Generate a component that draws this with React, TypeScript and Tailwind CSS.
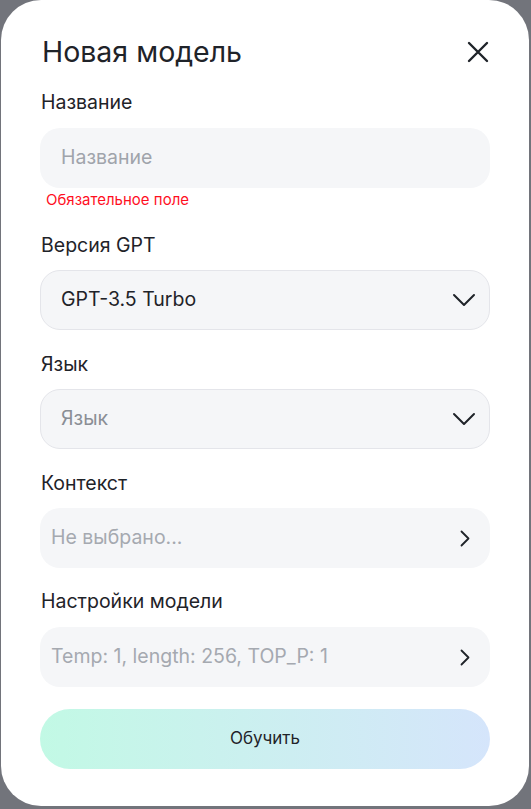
const font = { fontFamily: "Inter, 'Noto Sans', sans-serif" };

function Label({ children }: { children: React.ReactNode }) {
  return <div className="text-[19.5px] leading-6 text-[#1f2329]">{children}</div>;
}

function CloseIcon() {
  return (
    <svg width="22" height="22" viewBox="0 0 22 22" fill="none" stroke="currentColor" strokeWidth="2.4" strokeLinecap="round">
      <path d="M2 2l18 18M20 2L2 20" />
    </svg>
  );
}

function DownIcon() {
  return (
    <svg width="24" height="14" viewBox="0 0 24 14" fill="none" stroke="currentColor" strokeWidth="2" strokeLinecap="round" strokeLinejoin="round">
      <path d="M2 2l10 10L22 2" />
    </svg>
  );
}

function RightIcon() {
  return (
    <svg width="10" height="17" viewBox="0 0 10 17" fill="none" stroke="currentColor" strokeWidth="1.8" strokeLinecap="round" strokeLinejoin="round">
      <path d="M1.5 1.5l7 7-7 7" />
    </svg>
  );
}

export default function App() {
  return (
    <div className="w-[531px] h-[809px] bg-[#72747b] pl-px pr-[2px] pb-[3px]" style={font}>
      <div className="h-full bg-white rounded-[40px] pl-[39px] pr-[39px] pt-[34px] flex flex-col">
        {/* header */}
        <div className="flex items-center justify-between">
          <h1 className="text-[28.5px] leading-9 text-[#1f2329] pl-[2px]">Новая модель</h1>
          <button className="text-[#1f2329] mr-[1px]">
            <CloseIcon />
          </button>
        </div>

        <div className="mt-[20px]">
          <div className="pl-[1px]"><Label>Название</Label></div>
          <div className="mt-[14px] h-[60px] rounded-[20px] bg-[#f5f6f8] flex items-center px-[21px]">
            <span className="text-[19.5px] text-[#a0a4ab]">Название</span>
          </div>
          <div className="mt-[2px] pl-[6px] text-[15px] leading-5 text-[#ff0f1f]">Обязательное поле</div>
        </div>

        <div className="mt-[23px]">
          <div className="pl-[1px]"><Label>Версия GPT</Label></div>
          <div className="mt-[13px] h-[60px] rounded-[20px] bg-[#f5f6f8] border border-[#e4e5ea] flex items-center justify-between pl-5 pr-[13px]">
            <span className="text-[19.5px] text-[#1f2329]">GPT-3.5 Turbo</span>
            <span className="text-[#1f2329]"><DownIcon /></span>
          </div>
        </div>

        <div className="mt-[22px]">
          <div className="pl-[1px]"><Label>Язык</Label></div>
          <div className="mt-[13px] h-[60px] rounded-[20px] bg-[#f5f6f8] border border-[#e4e5ea] flex items-center justify-between pl-5 pr-[13px]">
            <span className="text-[19.5px] text-[#8a8e95]">Язык</span>
            <span className="text-[#1f2329]"><DownIcon /></span>
          </div>
        </div>

        <div className="mt-[22px]">
          <div className="pl-[1px]"><Label>Контекст</Label></div>
          <div className="mt-[13px] h-[60px] rounded-[20px] bg-[#f5f6f8] flex items-center justify-between pl-[11px] pr-[20px]">
            <span className="text-[19.5px] text-[#a5a9b0]">Не выбрано...</span>
            <span className="text-[#1f2329]"><RightIcon /></span>
          </div>
        </div>

        <div className="mt-[21px]">
          <div className="pl-[1px]"><Label>Настройки модели</Label></div>
          <div className="mt-[14px] h-[60px] rounded-[20px] bg-[#f5f6f8] flex items-center justify-between pl-[11px] pr-[20px]">
            <span className="text-[19.5px] text-[#a5a9b0]">Temp: 1, length: 256, TOP_P: 1</span>
            <span className="text-[#1f2329]"><RightIcon /></span>
          </div>
        </div>

        <button className="mt-[22px] h-[60px] rounded-full bg-gradient-to-r from-[#c2f9e5] to-[#d5e5fb] text-[17px] text-[#1f2329]">
          Обучить
        </button>
      </div>
    </div>
  );
}
